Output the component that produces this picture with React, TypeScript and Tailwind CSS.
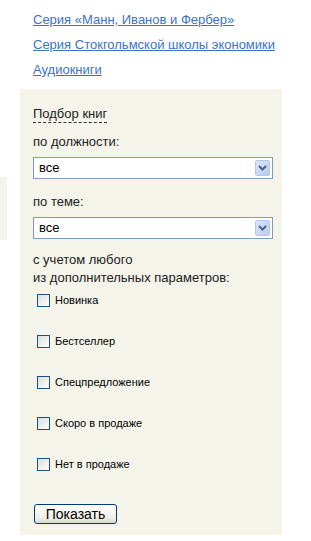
import React from "react";

function Chevron() {
  return (
    <svg width="9" height="6" viewBox="0 0 9 6">
      <path d="M1 1 L4.5 4.5 L8 1" fill="none" stroke="#4d6185" strokeWidth="2" />
    </svg>
  );
}

function Select() {
  return (
    <div className="w-[240px] h-[22px] border border-[#7f9db9] bg-white flex items-center justify-between pl-[5px] pr-[2px]">
      <span className="text-[13px] text-black leading-[16px]">все</span>
      <div className="w-[15px] h-[16px] rounded-[2px] border border-[#b6c7ee] bg-[linear-gradient(135deg,#dde6fc,#b8cbf6)] flex items-center justify-center">
        <Chevron />
      </div>
    </div>
  );
}

function Check({ label, first }: { label: string; first?: boolean }) {
  return (
    <div className={`flex items-center h-[13px] pl-[4px] ${first ? "mt-[7px]" : "mt-[28px]"}`}>
      <div className="w-[13px] h-[13px] border border-[#1c5180] bg-[linear-gradient(135deg,#dcdcd7,#ffffff)]" />
      <span className="ml-[5px] text-[11px] leading-[13px] text-black pt-[1px]">{label}</span>
    </div>
  );
}

export default function App() {
  return (
    <div className="w-[311px] h-[541px] bg-white font-['Liberation_Sans',Arial,sans-serif] overflow-hidden">
      <div className="pt-[7px] pl-[33px] text-[13px] leading-[25px]">
        <div><a href="#" className="text-[#3a74c4] underline">Серия «Манн, Иванов и Фербер»</a></div>
        <div><a href="#" className="text-[#3a74c4] underline">Серия Стокгольмской школы экономики</a></div>
        <div><a href="#" className="text-[#3a74c4] underline">Аудиокниги</a></div>
      </div>
      <div className="flex mt-[7px]">
        <div className="w-[7px] h-[63px] mt-[88px] bg-[#f4f4ea]" />
        <div className="ml-[13px] w-[262px] h-[446px] bg-[#f4f4ea] pl-[13px] pt-[15px] text-[13px] text-[#222]">
          <span className="inline-block leading-[16px] border-b border-dashed border-[#333]">Подбор книг</span>
          <div className="leading-[16px] mt-[10px] mb-[7px]">по должности:</div>
          <Select />
          <div className="leading-[16px] mt-[15px] mb-[7px]">по теме:</div>
          <Select />
          <div className="leading-[18px] mt-[12px]">
            с учетом любого
            <br />
            из дополнительных параметров:
          </div>
          <Check label="Новинка" first />
          <Check label="Бестселлер" />
          <Check label="Спецпредложение" />
          <Check label="Скоро в продаже" />
          <Check label="Нет в продаже" />
          <button className="mt-[33px] ml-[1px] w-[83px] h-[20px] rounded-[3px] border border-[#003c74] bg-[linear-gradient(180deg,#ffffff,#f0efe8_70%,#dcd9cc)] text-[14px] leading-[16px] text-black flex items-center justify-center">
            Показать
          </button>
        </div>
      </div>
    </div>
  );
}
